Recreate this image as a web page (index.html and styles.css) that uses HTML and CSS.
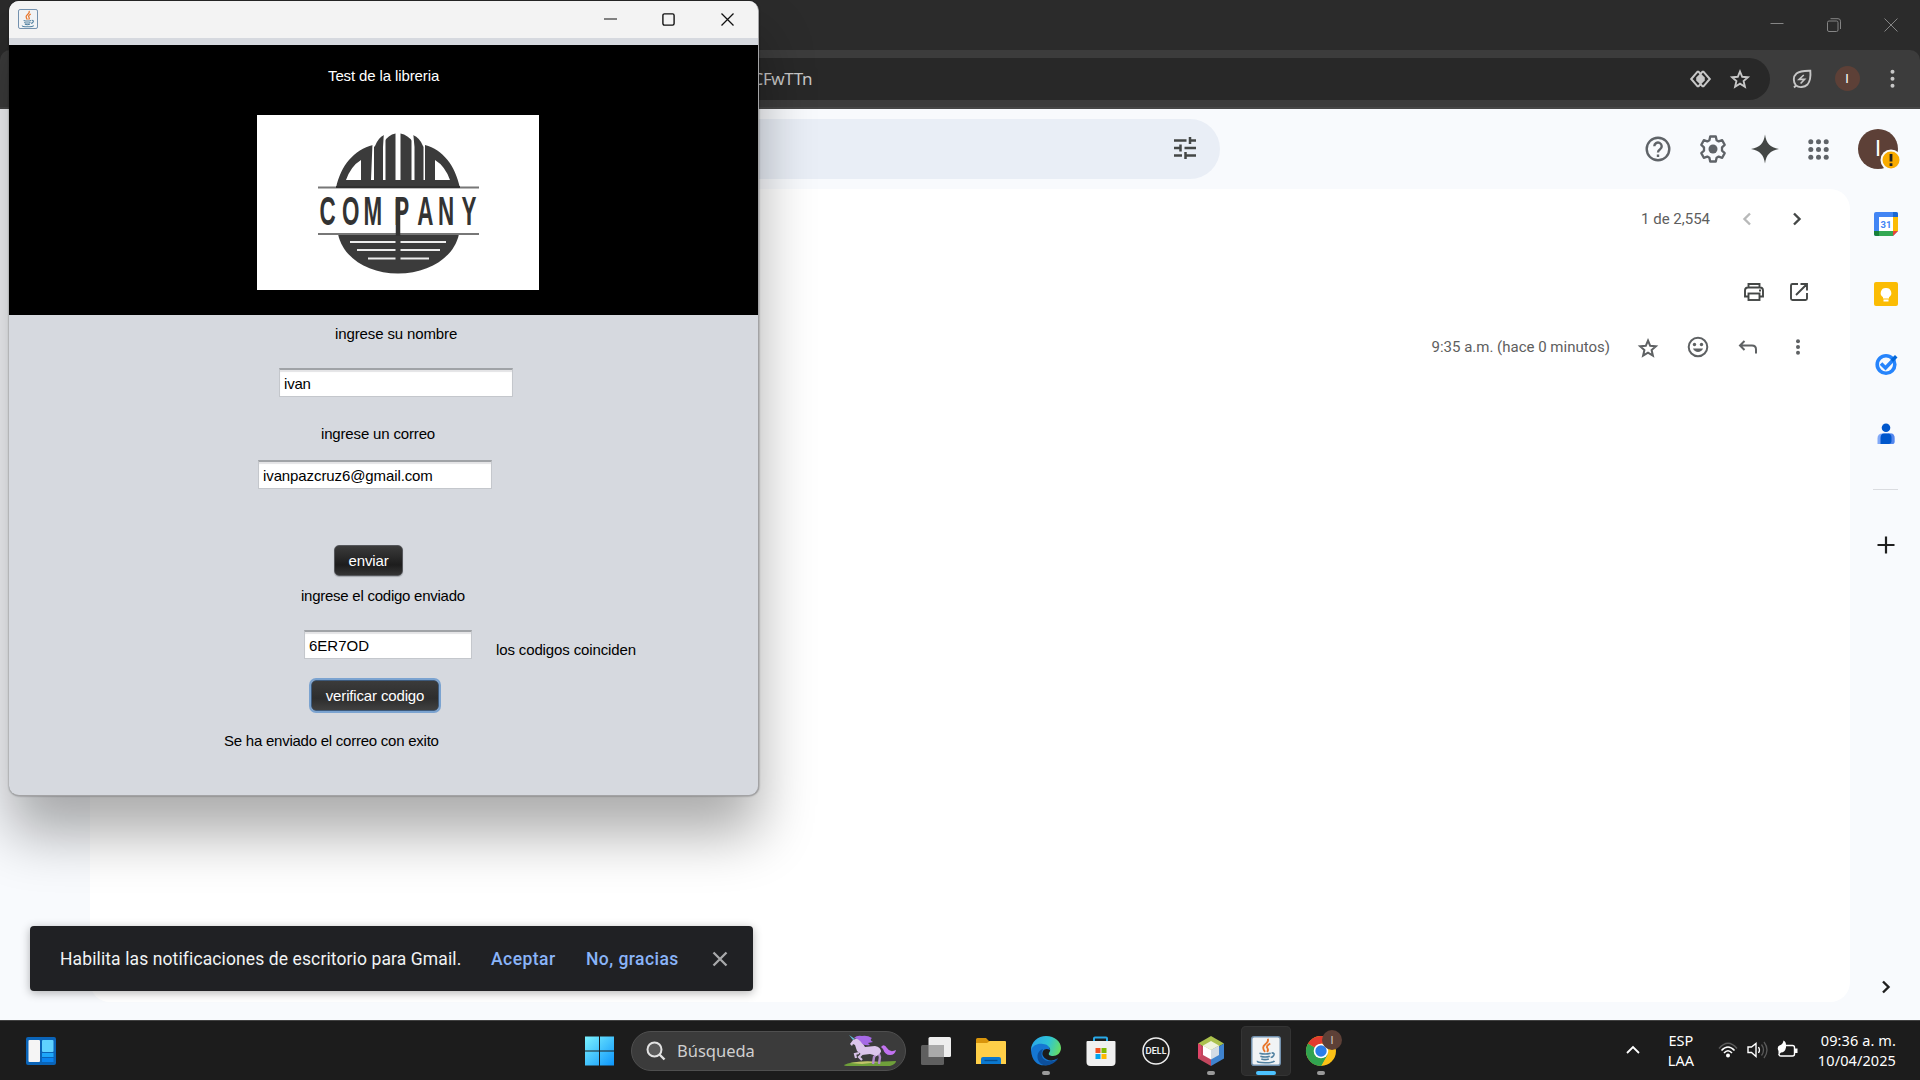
FILE: index.html
```html
<!DOCTYPE html>
<html lang="es">
<head>
<meta charset="utf-8">
<title>Gmail</title>
<link rel="stylesheet" href="styles.css">
</head>
<body>
<div class="desktop">
  <main class="browser">
    <div class="tabbar">
      <span class="cell w56"><svg width="14" height="14" viewBox="0 0 14 14" class="thin"><path d="M0.5 5.500h13"/></svg></span>
      <span class="cell w57"><svg width="14" height="14" viewBox="0 0 14 14" class="thin"><rect x=".5" y="3" width="10.500" height="10.500" rx="1.500"/><path d="M3.500.7h7.500a2.500 2.500 0 0 1 2.500 2.500V11"/></svg></span>
      <span class="cell w58"><svg width="14" height="14" viewBox="0 0 14 14" class="thin"><path d="M.5.5l13 13M13.500.5l-13 13"/></svg></span>
    </div>
    <div class="toolbar">
      <div class="urlbar">
        <span class="url">CFwTTn</span>
        <span class="cell w40"><svg width="21" height="18" viewBox="0 0 21 18"><path d="M8 1.200L1.200 9 8 16.800M13 1.200L19.800 9 13 16.800M8 1.200L10.500 4 13 1.200M8 16.800L10.500 14 13 16.800" fill="none" stroke="#c7c7c7" stroke-width="2"/><path d="M10.500 3.200L14.800 7.500v3l-4.300 4.300-4.300-4.300v-3z" fill="#c7c7c7"/></svg></span>
        <span class="cell w40"><svg width="20" height="20" viewBox="0 0 20 20"><path d="M10 2.500l2.200 5.300 5.700.5-4.300 3.800 1.300 5.600-4.900-3-4.900 3 1.300-5.600L2.100 8.300l5.700-.5z" fill="none" stroke="#c7c7c7" stroke-width="1.900"/></svg></span>
      </div>
      <span class="cell w45"><svg width="20" height="20" viewBox="0 0 20 20" fill="none" stroke="#c7c7c7" stroke-width="1.900"><path d="M4 16.500C1 13 1 7.500 4.500 4.500 8 1.500 13 1.600 18.300 1.700c.5 5.300.2 10.300-2.800 13.800-3 3-8.500 3.500-11.500 1zM4.500 16L2 18.500"/><path d="M11.800 6L7 10.400h5.600L8.600 14.500" stroke-width="1.600"/></svg></span>
      <span class="cell w45"><span class="avatar-s">I</span></span>
      <span class="cell w45"><svg width="6" height="20" viewBox="0 0 6 20" fill="#c7c7c7"><circle cx="3.500" cy="2.800" r="2"/><circle cx="3.500" cy="9.800" r="2"/><circle cx="3.500" cy="16.800" r="2"/></svg></span>
    </div>
    <header class="mail-head">
      <div class="search"><svg width="24" height="24" viewBox="0 0 24 24" fill="none" stroke="#444746" stroke-width="2.500"><path d="M1 4.500h12.500M17 1v7M17 4.500h6M1 12h7M7.500 8.500v7M11.500 12H23M1 19.500h8M12.500 16v7M12.500 19.500H23"/></svg></div>
      <div class="head-icons">
        <span class="cell w56"><svg width="26" height="26" viewBox="0 0 26 26" fill="none" stroke="#5f6368" stroke-width="2.400"><circle cx="13" cy="13" r="11.300"/><path d="M9.300 10.300a3.700 3.700 0 1 1 5.800 3C13.700 14.300 13 15 13 16.500M13 18.400v2.500"/></svg></span>
        <span class="cell w54"><svg width="26" height="28" viewBox="0 0 26 28"><path d="M10.200 1.500h5.600l.8 3.700 2.100 1.200 3.500-1.200 2.500 4.700-2.700 2.500v3.200l2.700 2.500-2.500 4.700-3.500-1.200-2.100 1.200-.8 3.700h-5.600l-.8-3.700-2.100-1.200-3.500 1.200-2.500-4.700L4 15.600v-3.200L1.300 9.900l2.500-4.700 3.500 1.200 2.100-1.200z" fill="none" stroke="#5f6368" stroke-width="2.300" stroke-linejoin="round"/><circle cx="13" cy="14" r="4.500" fill="#5f6368"/></svg></span>
        <span class="cell w50"><svg width="28" height="30" viewBox="0 0 28 30"><path d="M14 .5C15.200 9 19 13.500 28 15c-9 1.500-12.800 6-14 14.500C12.800 21 9 16.500 0 15 9 13.500 12.800 9 14 .5z" fill="#444746"/></svg></span>
        <span class="cell w56"><svg width="21" height="21" viewBox="0 0 21 21" fill="#5f6368"><circle cx="2.800" cy="2.800" r="2.500"/><circle cx="10.500" cy="2.800" r="2.500"/><circle cx="18.200" cy="2.800" r="2.500"/><circle cx="2.800" cy="10.500" r="2.500"/><circle cx="10.500" cy="10.500" r="2.500"/><circle cx="18.200" cy="10.500" r="2.500"/><circle cx="2.800" cy="18.200" r="2.500"/><circle cx="10.500" cy="18.200" r="2.500"/><circle cx="18.200" cy="18.200" r="2.500"/></svg></span>
        <span class="cell w64"><span class="avatar">I<svg class="badge" width="22" height="22" viewBox="0 0 22 22"><circle cx="11" cy="11" r="10.500" fill="#f8fafd"/><circle cx="11" cy="11" r="8.500" fill="#f9ab00"/><path d="M11 5v7.500M11 14.300v2.700" stroke="#202124" stroke-width="2.800"/></svg></span></span>
      </div>
    </header>
    <div class="mail-body">
      <section class="card">
        <div class="pager">
          <span class="count">1 de 2,554</span>
          <span class="cell w50"><svg width="10" height="14" viewBox="0 0 10 14" fill="none" stroke="#b8b9b9" stroke-width="2.400"><path d="M8 1.500L2.500 7 8 12.500"/></svg></span>
          <span class="cell w50"><svg width="10" height="14" viewBox="0 0 10 14" fill="none" stroke="#444746" stroke-width="2.400"><path d="M2 1.500L7.500 7 2 12.500"/></svg></span>
        </div>
        <div class="actions">
          <span class="cell w45"><svg width="22" height="20" viewBox="0 0 22 20" fill="none" stroke="#444746" stroke-width="1.900"><path d="M5.500 5.500V2h11v3.500M5.500 14.500H2V8.500a3 3 0 0 1 3-3h12a3 3 0 0 1 3 3v6h-3.500"/><rect x="5.500" y="11.500" width="11" height="6.500"/><path d="M16 8.500h2"/></svg></span>
          <span class="cell w45"><svg width="20" height="20" viewBox="0 0 20 20" fill="none" stroke="#444746" stroke-width="1.900"><path d="M9 2H3.500Q2 2 2 3.500v13Q2 18 3.500 18h13q1.500 0 1.500-1.500V11M11.500 2H18v6.500M18 2L7 13"/></svg></span>
        </div>
        <div class="meta">
          <span class="time">9:35 a.m. (hace 0 minutos)</span>
          <span class="cell w50"><svg class="down" width="20" height="20" viewBox="0 0 20 20"><path d="M10 2.500l2.200 5.300 5.700.5-4.300 3.800 1.300 5.600-4.900-3-4.900 3 1.300-5.600L2.100 8.300l5.700-.5z" fill="none" stroke="#5e6163" stroke-width="2"/></svg></span>
          <span class="cell w50"><svg width="22" height="22" viewBox="0 0 22 22"><circle cx="11" cy="11" r="9.300" fill="none" stroke="#5e6163" stroke-width="2"/><circle cx="7.500" cy="8.500" r="1.700" fill="#5e6163"/><circle cx="14.500" cy="8.500" r="1.700" fill="#5e6163"/><path d="M6 12.500h10c-1.500 4.500-8.500 4.500-10 0z" fill="#5e6163"/></svg></span>
          <span class="cell w50"><svg width="20" height="16" viewBox="0 0 20 16" fill="none" stroke="#5e6163" stroke-width="2"><path d="M6.500 2L2 6.500 6.500 11M2 6.500h12q4 0 4 4V14.500"/></svg></span>
          <span class="cell w50"><svg width="6" height="18" viewBox="0 0 6 18" fill="#5e6163"><circle cx="3" cy="3.200" r="2"/><circle cx="3" cy="9" r="2"/><circle cx="3" cy="14.800" r="2"/></svg></span>
        </div>
      </section>
      <aside class="side">
        <svg width="24" height="24" viewBox="0 0 24 24"><path d="M2 0h20a2 2 0 0 1 2 2v17l-5 5H2a2 2 0 0 1-2-2V2a2 2 0 0 1 2-2z" fill="#4285f4"/><path d="M19 0h3a2 2 0 0 1 2 2v3h-5z" fill="#1967d2"/><path d="M19 5h5v14h-5z" fill="#fbbc04"/><path d="M5 19h14v5H5z" fill="#34a853"/><path d="M0 19h5v5H2a2 2 0 0 1-2-2z" fill="#188038"/><path d="M19 19h5l-5 5z" fill="#ea4335"/><path d="M5 5h14v14H5z" fill="#fff"/><text x="12" y="15.600" text-anchor="middle" font-family="Roboto,sans-serif" font-weight="700" font-size="9.500" fill="#4285f4">31</text></svg>
        <svg width="24" height="24" viewBox="0 0 24 24"><rect width="24" height="24" rx="2" fill="#fbbc04"/><path d="M12 6a5 5 0 0 0-3 9.200V16.500h6v-1.300A5 5 0 0 0 12 6zM9.500 17.500h5v2h-5z" fill="#fff"/></svg>
        <svg width="24" height="24" viewBox="0 0 24 24"><circle cx="12" cy="12.500" r="8.800" fill="none" stroke="#2684fc" stroke-width="3.600"/><path d="M7 11.500l4.500 4.500L20.500 6.500" fill="none" stroke="#2684fc" stroke-width="3.600"/><path d="M16.500 7.500L21 3l2.500 2.500-4.500 4.500z" fill="#0066da"/></svg>
        <svg width="24" height="24" viewBox="0 0 24 24"><circle cx="12" cy="5.700" r="4.300" fill="#0057cc"/><path d="M8.500 11.500h8q4 0 4 4.500v4q0 2-2 2H3.500V16.500q0-5 5-5z" fill="#82a9f8"/><path d="M14 11.500h3q3.500 0 3.500 4.500v4q0 2-2 2H14z" fill="#5487ee"/><path d="M10 11.500h3.500q4 0 4 4V19q0 3-3 3H6.500v-6q0-4.500 3.500-4.500z" fill="#0057cc"/></svg>
        <hr class="side-line">
        <svg class="plus" width="18" height="18" viewBox="0 0 18 18"><path d="M9 .5v17M.5 9h17" stroke="#1f1f1f" stroke-width="2.200"/></svg>
        <svg class="expand" width="10" height="14" viewBox="0 0 10 14" fill="none" stroke="#1f1f1f" stroke-width="2.400"><path d="M2 1.500L7.500 7 2 12.500"/></svg>
      </aside>
    </div>
  </main>

  <div class="toast">
    <span class="toast-msg">Habilita las notificaciones de escritorio para Gmail.</span>
    <span class="link accept">Aceptar</span>
    <span class="link decline">No, gracias</span>
    <svg width="16" height="16" viewBox="0 0 16 16"><path d="M1.500 1.500l13 13M14.500 1.500l-13 13" stroke="#a8a9ab" stroke-width="2.300"/></svg>
  </div>

  <div class="java-window">
    <div class="titlebar">
      <svg class="app-icon" width="20" height="20" viewBox="0 0 32 32"><use href="#java"/></svg>
      <span class="cell w58"><svg width="13" height="13" viewBox="0 0 13 13" fill="none" stroke="#111" stroke-width="1.200"><path d="M0 6h13"/></svg></span>
      <span class="cell w58"><svg width="13" height="13" viewBox="0 0 13 13" fill="none" stroke="#111" stroke-width="1.400"><rect x=".9" y=".9" width="11.200" height="11.200" rx="1.500"/></svg></span>
      <span class="cell w60"><svg width="13" height="13" viewBox="0 0 13 13" fill="none" stroke="#111" stroke-width="1.300"><path d="M.5.5l12 12M12.500.5l-12 12"/></svg></span>
    </div>
    <div class="banner">
      <div class="banner-title">Test de la libreria</div>
      <svg class="logo" width="282" height="175" viewBox="0 0 282 175">
        <rect width="282" height="175" fill="#fff"/>
        <clipPath id="bottom"><path d="M0 120h282v55H0z"/></clipPath>
        <path d="M79 73C84 50 97 35 116 30V33L118 31Q121 23 127 20V27Q131 20 138.500 18.500H143.500Q151 20 156 27V20Q163 23 166 31L168 33V30C186 35 198 50 203 73z" fill="#3b3b3b"/>
        <path d="M104 45v20H89q5-14 15-20zM178 45v20h15q-5-14-15-20z" fill="#fff"/>
        <path d="M138.500 16h5v49h-5zM127 16h1.500v49H126V32zM156 16h-1.500v49h3V32zM115.500 28h1.500v37h-3zM168 28h-1.500v37h1.500z" fill="#fff"/>
        <path d="M61 72.500h161M61 119h161" stroke="#777" stroke-width="2"/>
        <path d="M79 72h124" stroke="#303030" stroke-width="2"/>
        <g clip-path="url(#bottom)">
          <path d="M81 119h121C197 143 171 158.500 141 158.500S86 143 81 119z" fill="#3b3b3b"/>
          <path d="M93 127h45.500M143.500 127h45.500M100 135h38.500M143.500 135h39.500M111 143.500h27.500M143.500 143.500H172" stroke="#eee" stroke-width="2"/>
        </g>
        <path d="M141 84v37" stroke="#333" stroke-width="4.500"/>
        <g transform="scale(.56 1)"><text class="logo-text" x="111.600 152 190 245 286 323 365" y="110">COMPANY</text></g>
      </svg>
    </div>
    <div class="form">
      <div class="label l1">ingrese su nombre</div>
      <div class="field f1">ivan</div>
      <div class="label l2">ingrese un correo</div>
      <div class="field f2">ivanpazcruz6@gmail.com</div>
      <div class="button b1">enviar</div>
      <div class="label l3">ingrese el codigo enviado</div>
      <div class="code-row">
        <div class="field f3">6ER7OD</div>
        <div class="label l5">los codigos coinciden</div>
      </div>
      <div class="button b2">verificar codigo</div>
      <div class="label l4">Se ha enviado el correo con exito</div>
    </div>
  </div>

  <footer class="taskbar">
    <div class="widgets"><svg width="30" height="30" viewBox="0 0 30 30"><rect y="1" width="30" height="28" rx="2" fill="#0a64b8"/><rect x="2.500" y="4" width="11.500" height="22" rx="1" fill="#f5f5f5"/><rect x="16" y="4" width="11.500" height="12" rx="1" fill="#5fd2ff"/><rect x="16" y="17" width="11.500" height="4" fill="#1ea7fa"/><rect x="16" y="22" width="11.500" height="4" fill="#0a84f0"/></svg></div>
    <div class="apps">
      <svg class="start" width="30" height="30" viewBox="0 0 30 30"><defs><linearGradient id="win" x1="0" y1="0" x2="30" y2="30" gradientUnits="userSpaceOnUse"><stop stop-color="#7cf3ff"/><stop offset="1" stop-color="#0a93fb"/></linearGradient></defs><path d="M0 .5h14v14H0zM15 .5h14v14H15zM0 15.500h14v14H0zM15 15.500h14v14H15z" fill="url(#win)"/></svg>
      <div class="task-search">
        <svg width="20" height="20" viewBox="0 0 20 20" fill="none" stroke="#e2e2e2" stroke-width="2"><circle cx="8.500" cy="8.500" r="7" fill="#5a5a5a"/><path d="M13.500 13.500l5 5" stroke-width="2.400"/></svg>
        <span class="task-search-text">Búsqueda</span>
        <svg width="54" height="34" viewBox="0 0 54 34">
          <path d="M0 31Q8 27 28 28l24-1q0 3-6 5H3q-3 0-3-1z" fill="#6fa03a"/><path d="M6 29Q20 26 36 28l-18 2z" fill="#c3c46a"/>
          <path d="M9 6L5 1l6 4z" fill="#63bcd8"/>
          <path d="M37 13q3-4 6 1 3 5 9 2-1 5-6 5-5 0-7-6z" fill="#c272f0"/>
          <path d="M34 17l2 6-1 7M36 16l-6 7-1 7" fill="none" stroke="#b18bcb" stroke-width="2.400"/>
          <path d="M9 6l5-2 4 4 3 5 10-1q6 1 6 6l-4 4-7-2-8 1-5-4-2-6-2-1-1 2-2-2z" fill="#dcc5ec"/>
          <path d="M15 19l-4 1 1 4M18 20l-3 3 3 3" fill="none" stroke="#d6c1e6" stroke-width="2.200"/>
          <path d="M10 4q3-3 8-2 5-1 10 2-3 2 1 4l-5 1 2 2q-7 1-9-3-2-3-7-4z" fill="#a66ae6"/>
        </svg>
      </div>
      <div class="app"><svg width="30" height="30" viewBox="0 0 30 30"><rect x="7.500" y="1" width="22.500" height="20" rx="1.500" fill="#eee"/><rect y="9" width="23" height="20" rx="1.500" fill="#5f5f5f"/><path d="M7.500 9H23v12H7.500z" fill="#aaa"/></svg></div>
      <div class="app"><svg width="30" height="30" viewBox="0 0 30 30"><path d="M0 3.500Q0 2 1.500 2H10l3 3h14v6H0z" fill="#d9950b"/><path d="M0 7h11l3-2h15q1 0 1 1v22H0z" fill="#ffcf48"/><path d="M5 28v-5q0-2 2-2h16q2 0 2 2v5z" fill="#0b78cf"/><path d="M8.500 24.500h13" stroke="#064d8d" stroke-width="1.300"/></svg></div>
      <div class="app"><svg width="30" height="30" viewBox="0 0 30 30"><defs><linearGradient id="edge" x1="2" y1="5" x2="30" y2="15" gradientUnits="userSpaceOnUse"><stop stop-color="#2aa9e8"/><stop offset=".5" stop-color="#2ec4d6"/><stop offset="1" stop-color="#6be05a"/></linearGradient></defs><path d="M0 14C0 6 7 0 15 0c9 0 15 6 15 12 0 5-4 8-8 8-3 0-5-1-4-3 3-4 0-7-4-7-5 0-10 3-10 10z" fill="url(#edge)"/><path d="M0 14c2-5 7-7 12-6 4 0 7 3 7 6-5-3-9 1-7 6 3 5 10 6 15 2C20 32 1 34 0 14z" fill="#1577d2"/><path d="M12 13q-4 7 2 11 6 3 13-1c-5 6-12 8-17 5-5-4-5-13 2-15z" fill="#0c4f9c"/></svg><i class="dot"></i></div>
      <div class="app"><svg width="30" height="30" viewBox="0 0 30 30"><path d="M8 8V2.500q0-1 1-1h11q1 0 1 1V8" fill="none" stroke="#29a9e8" stroke-width="2"/><path d="M.5 6q0-1 1-1h27q1 0 1 1v20q0 4-4 4h-21q-4 0-4-4z" fill="#f0f0f0"/><path d="M9.500 12h5v5h-5z" fill="#f25022"/><path d="M15.500 12h5v5h-5z" fill="#7fba00"/><path d="M9.500 18h5v5h-5z" fill="#00a4ef"/><path d="M15.500 18h5v5h-5z" fill="#ffb900"/></svg></div>
      <div class="app"><svg width="30" height="30" viewBox="0 0 30 30"><circle cx="15" cy="15" r="13" fill="none" stroke="#eee" stroke-width="1.500"/><text x="15" y="18" text-anchor="middle" textLength="21" lengthAdjust="spacingAndGlyphs" font-family="Inter,sans-serif" font-size="8.500" font-weight="700" fill="#eee">DELL</text></svg></div>
      <div class="app"><svg width="30" height="30" viewBox="0 0 30 30"><path d="M15 0l13 7.500-13 7.500L2 7.500z" fill="#abc14c"/><path d="M2 7.500L15 15v15L2 22.500z" fill="#c3475e"/><path d="M28 7.500L15 15v15l13-7.500z" fill="#3f83cf"/><path d="M2 7.500L5 9v11l-3 2.500z" fill="#e04468"/><path d="M15 5l8 4.500-8 4.500-8-4.500z" fill="#f0f3dc"/><path d="M7 9.500l8 4.500v9.500l-8-4.500z" fill="#fff"/><path d="M23 9.500L15 14v9.500l8-4.500z" fill="#d3dbe5"/></svg><i class="dot"></i></div>
      <div class="app active"><svg width="30" height="30" viewBox="0 0 32 32"><g id="java"><rect x=".8" y=".8" width="30.400" height="30.400" rx="2.500" fill="#f1f3f5" stroke="#7391ae" stroke-width="1.600"/><path d="M18 3q1 3-3 6-4 3 0 8M20.500 8q-5 3-3 5 1.500 2-.5 4" fill="none" stroke="#e8762c" stroke-width="2"/><path d="M9 18.300q6 1.800 12 0M10 21.500q5 1.700 10 0M11 24.500q4 1.300 8 0M7 26.500q-1 2 8 2t10-2M22 18q4 0 2 3-1 1.500-3 2" fill="none" stroke="#5382a1" stroke-width="1.700"/></g></svg><i class="dot wide"></i></div>
      <div class="app"><svg class="chrome" width="38" height="36" viewBox="0 -6 38 36"><circle cx="15" cy="15" r="15" fill="#fbc116"/><path d="M15 15L2 7.500A15 15 0 0 0 15 30l6.500-11.200z" fill="#31a350"/><path d="M15 15L2 7.500a15 15 0 0 1 26 0H15z" fill="#e33b2e"/><path d="M15 30L22 17 15 15l-4 6z" fill="#31a350"/><circle cx="15" cy="15" r="7.300" fill="#fff"/><circle cx="15" cy="15" r="5.700" fill="#2b7de9"/><circle cx="26" cy="4" r="10" fill="#5d4037"/><text x="26" y="8" text-anchor="middle" font-family="Roboto,sans-serif" font-size="11" fill="#d5c9c5">I</text></svg><i class="dot"></i></div>
    </div>
    <div class="tray">
      <svg class="chev" width="14" height="9" viewBox="0 0 14 9" fill="none" stroke="#fff" stroke-width="1.800"><path d="M1 8l6-6 6 6"/></svg>
      <div class="lang">ESP<br>LAA</div>
      <svg class="wifi" width="20" height="18" viewBox="0 0 20 18" fill="none"><path d="M1 7.500q9-10.500 18 0" stroke="#5a5a5a" stroke-width="1.500"/><path d="M3.500 9.500q6.500-7 13 0M6 12q4-4.500 8 0" stroke="#fff" stroke-width="1.600"/><circle cx="10" cy="14.500" r="2" fill="#fff"/></svg>
      <svg class="vol" width="21" height="18" viewBox="0 0 21 18" fill="none"><path d="M1 6h3.500L9 2.500v13l-4.500-4H1z" stroke="#fff" stroke-width="1.400"/><path d="M11.500 6q2 3 0 6" stroke="#fff" stroke-width="1.300"/><path d="M14.500 3.500q4 5.500 0 11M17 1q6 8 0 16" stroke="#5a5a5a" stroke-width="1.300"/></svg>
      <svg class="bat" width="21" height="18" viewBox="0 0 21 18"><path d="M9 4.500h6.500q2 0 2 2v6.500q0 2-2 2H4q-2 0-2-2" fill="none" stroke="#fff" stroke-width="1.400"/><path d="M18 7.500h2.500v4.500H18zM6.500-.5q3 1 2.500 7-1 5-5 5L1.500 14v-4q-2-4 1-5.500 3.500-1 4-5z" fill="#fff"/></svg>
      <div class="clock">09:36 a. m.<br>10/04/2025</div>
    </div>
  </footer>
</div>
</body>
</html>
```
FILE: styles.css
```css
* { box-sizing: border-box; }
body { margin: 0; background: #1c1c1c; overflow: hidden; }
svg { display: block; flex: none; overflow: visible; }
.desktop { position: relative; width: 1920px; height: 1080px; overflow: hidden; display: flex; flex-direction: column; white-space: nowrap; }
.cell { display: flex; align-items: center; justify-content: center; flex: none; }
.w40 { width: 40px; } .w45 { width: 45px; } .w50 { width: 50px; } .w54 { width: 54px; }
.w56 { width: 56px; } .w57 { width: 57px; } .w58 { width: 58px; } .w60 { width: 60px; } .w64 { width: 64px; }

/* Browser */
.browser { height: 1020px; display: flex; flex-direction: column; background: #2b2b2b; }
.tabbar { height: 50px; display: flex; justify-content: flex-end; }
.thin { fill: none; stroke: #858585; stroke-width: 1; }
.toolbar { height: 59px; background: #3c3c3c; border-bottom: 2px solid #474747; border-radius: 10px 10px 0 0; display: flex; align-items: center; padding: 0 5.5px 0 140px; }
.urlbar { width: 1630px; height: 42px; border-radius: 21px; background: #282828; margin-right: 9.5px; display: flex; align-items: center; padding-right: 10px; }
.urlbar .cell { height: 42px; }
.url { width: 672px; margin-right: auto; text-align: right; font: 17px/42px "Noto Sans", "Open Sans", sans-serif; letter-spacing: -.4px; color: #c7c7c7; }
.avatar-s { width: 25px; height: 25px; border-radius: 50%; background: #5d4037; color: #fff; font: 13px/25px Roboto, sans-serif; text-align: center; }

/* Mail */
.mail-head { height: 80px; background: #f8fafd; display: flex; align-items: center; padding: 0 10px 0 90px; }
.search { width: 1130px; height: 60px; border-radius: 30px; background: #e9eef6; display: flex; align-items: center; justify-content: flex-end; padding: 0 23px 2px 0; }
.head-icons { margin-left: auto; display: flex; align-items: center; }
.avatar { position: relative; width: 40px; height: 40px; border-radius: 50%; background: #5d4037; color: #fff; font: 22px/40px Roboto, sans-serif; text-align: center; }
.badge { position: absolute; left: 22px; top: 20px; }
.mail-body { height: 831px; background: #f8fafd; display: flex; padding: 0 0 18px 90px; }
.card { width: 1760px; background: #fff; border-radius: 20px; color: #5e5e5e; }
.pager, .actions, .meta { display: flex; justify-content: flex-end; align-items: center; }
.pager { height: 60px; padding-right: 28px; font: 15px Roboto, sans-serif; }
.count { margin-right: 12px; }
.actions { height: 86px; padding-right: 29px; }
.meta { height: 23px; padding-right: 27.5px; font: 15px Roboto, sans-serif; }
.meta .down { margin-top: 2px; }
.time { margin-right: 12.5px; }
.side { width: 70px; padding: 23px 0 0 1px; display: flex; flex-direction: column; align-items: center; gap: 46px; }
.side-line { width: 25px; height: 1px; border: 0; margin: -3px 0 0; background: #dadce0; }
.expand { margin-top: auto; margin-bottom: 8px; }

/* Notification prompt, over the page */
.toast { position: absolute; left: 30px; top: 926px; width: 723px; height: 65px; border-radius: 4px; background: #202124; box-shadow: 0 2px 10px rgba(0,0,0,.3); padding-left: 30px; display: flex; align-items: center; font: 17.500px Roboto, sans-serif; color: #f1f3f4; }
.toast-msg { width: 431px; letter-spacing: .11px; }
.link { color: #8ab4f8; font-weight: 500; letter-spacing: .45px; }
.accept { width: 95px; }
.decline { width: 126px; }

/* Java window */
.java-window { position: absolute; left: 9px; top: 1px; width: 750px; height: 795px; border-radius: 10px; overflow: hidden; background: #d6d9df; border: 1px solid #a3a3a5; border-width: 0 1px 1px 0; box-shadow: 0 38px 56px rgba(0,0,0,.33), 0 0 2px rgba(0,0,0,.5); font: 15px/20px "Liberation Sans", Arial, sans-serif; color: #000; }
.titlebar { height: 37px; background: #f3f3f3; display: flex; align-items: center; padding: 0 .5px 1px 0; }
.titlebar .cell { height: 36px; }
.app-icon { margin: 0 auto 0 9px; }
.banner { margin-top: 7px; height: 270px; background: #000; padding-top: 21px; }
.banner-title { height: 49px; padding-left: 319px; color: #fff; letter-spacing: -.12px; }
.logo { margin-left: 248px; }
.logo-text { font: 700 40px "Liberation Sans", sans-serif; fill: #333; }
.form { padding-top: 9px; }
.label { height: 20px; }
.field { height: 29px; width: 234px; background: #fff; border: 1px solid #c4c7cc; border-top: 2px solid #a0a3a7; box-shadow: inset 0 2px 1px #e4e4e6; padding: 0 0 0 4px; line-height: 27px; }
.button { height: 31px; border: 1px solid #55575b; border-radius: 5px; background: linear-gradient(#3b3b3b, #1d1d1d 65%, #343434); color: #fff; text-align: center; line-height: 30px; box-shadow: 0 1px 1px #a5a8ae; letter-spacing: -.15px; }
.l1 { margin-left: 326px; letter-spacing: -.12px; }
.f1 { margin: 24px 0 27px 270px; letter-spacing: -.2px; }
.l2 { margin-left: 312px; letter-spacing: -.16px; }
.f2 { margin: 16px 0 56px 249px; letter-spacing: -.1px; }
.b1 { width: 69px; margin: 0 0 10px 325px; }
.l3 { margin-left: 292px; letter-spacing: -.25px; }
.code-row { display: flex; margin: 24px 0 20px 295px; }
.f3 { width: 168px; margin-right: 24px; }
.l5 { margin-top: 10px; letter-spacing: -.13px; }
.b2 { width: 128px; height: 31px; margin: 0 0 20px 302px; border-color: #3d5a7c; background: linear-gradient(#3b3b3b, #2d2d2d 60%, #404040); box-shadow: 0 0 0 2px #7ba3d0; }
.l4 { margin-left: 215px; letter-spacing: -.24px; }

/* Taskbar */
.taskbar { height: 60px; border-top: 1px solid #414141; background: #1c1c1c; display: flex; align-items: center; color: #fff; font-family: "Noto Sans", "Open Sans", sans-serif; }
.widgets { width: 585px; padding-left: 26px; }
.apps { display: flex; align-items: center; height: 59px; }
.task-search { width: 275px; height: 40px; margin: 0 5px 0 16px; border-radius: 20px; background: #3b3b3b; border: 1px solid #4f4f4f; display: flex; align-items: center; padding: 0 7px 0 14px; }
.task-search-text { margin: 0 auto 0 11px; font-size: 16.500px; color: #cfcfcf; }
.app { position: relative; width: 50px; height: 50px; margin-right: 5px; display: flex; align-items: center; justify-content: center; border-radius: 5px; }
.app.active { background: #2b2b2b; box-shadow: inset 0 0 0 1px #343434; }
.dot { position: absolute; left: 21px; bottom: 1px; width: 8px; height: 4px; border-radius: 2px; background: #9a9a9a; }
.dot.wide { left: 15px; width: 20px; background: #4cc2ff; }
.chrome { margin: -6px 0 0 8px; }
.tray { margin-left: auto; padding: 0 24px 2px 0; display: flex; align-items: center; font-size: 14.500px; line-height: 20px; }
.chev { margin-right: 26px; }
.lang { width: 30px; text-align: center; margin-right: 22px; }
.wifi { margin-right: 9px; }
.vol { margin-right: 9px; }
.bat { margin-right: 20px; }
.clock { text-align: right; letter-spacing: .1px; }
```
